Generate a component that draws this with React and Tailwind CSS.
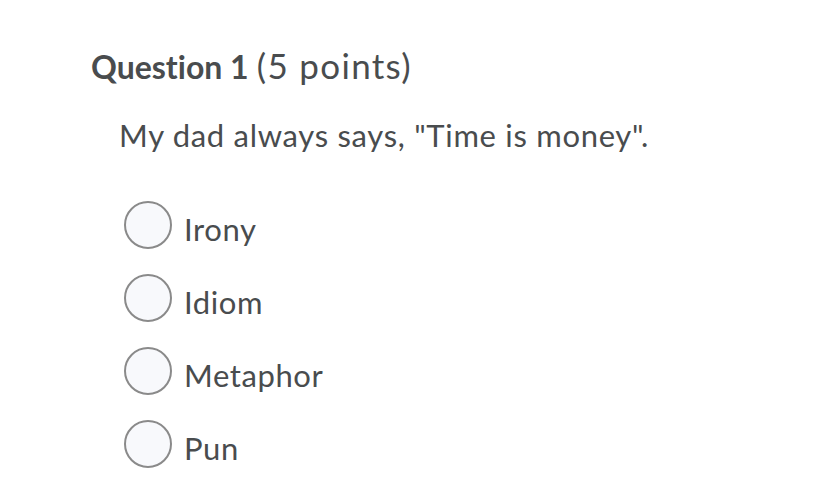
import React from 'react';

const options = ['Irony', 'Idiom', 'Metaphor', 'Pun'];

export default function App() {
	return (
		<div className="w-[826px] h-[500px] bg-white text-[#494c4e] overflow-hidden [font-variant-ligatures:none]" style={{ fontFamily: 'Lato, "Noto Sans", sans-serif' }}>
			<div className="pl-[91px] pt-[43px]">
				<h2 className="text-[32px] leading-[44px] whitespace-nowrap">
					<span className="font-bold text-[32px]">Question 1</span>{' '}
					<span className="text-[35px] tracking-[1.3px]">(5 points)</span>
				</h2>
				<p className="ml-[28px] mt-[26px] text-[31px] leading-[40px] tracking-[0.7px] whitespace-nowrap">
					My dad always says, "Time is money".
				</p>
				<div className="ml-[33px] mt-[46px] flex flex-col gap-[25px]">
					{options.map(opt => (
						<div key={opt} className="flex items-center gap-[12px] h-[48px]">
							<span className="w-[48px] h-[48px] rounded-full border-2 border-[#8a8a8a] bg-[#f8f9fc] shrink-0"></span>
							<span className="mt-[7px] text-[31px] leading-[40px] tracking-[0.6px]">{opt}</span>
						</div>
					))}
				</div>
			</div>
		</div>
	);
}
